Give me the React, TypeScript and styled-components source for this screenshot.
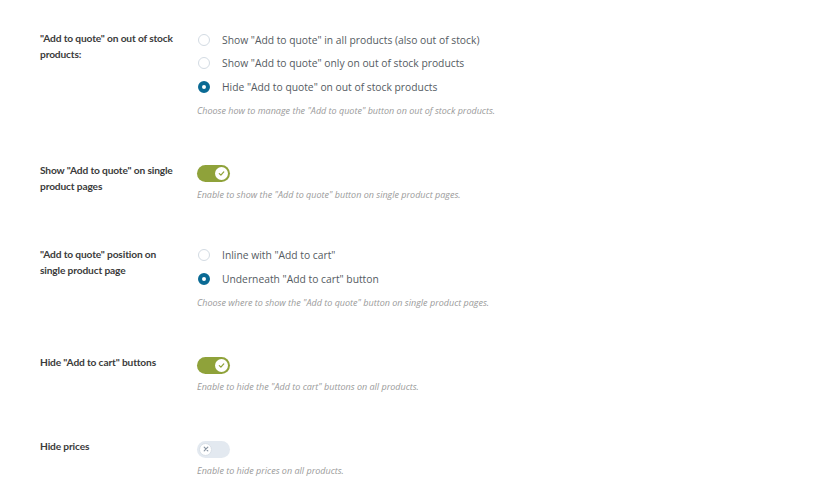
import React, { useState } from "react";
import styled, { createGlobalStyle } from "styled-components";

const GlobalStyle = createGlobalStyle`
  html, body {
    margin: 0;
    padding: 0;
    background: #ffffff;
  }
  body {
    font-family: "Open Sans", "Noto Sans", sans-serif;
    -webkit-font-smoothing: antialiased;
  }
`;

const Page = styled.div`
  width: 820px;
  height: 484px;
  padding: 30px 0 0 40px;
  box-sizing: border-box;
  display: flex;
  flex-direction: column;
  gap: 46px;
  overflow: hidden;
`;

const Row = styled.div`
  display: grid;
  grid-template-columns: 157px 1fr;
  align-items: start;
`;

const Label = styled.div`
  font-family: Lato, "Open Sans", sans-serif;
  font-size: 10.2px;
  line-height: 16px;
  font-weight: 700;
  letter-spacing: -0.15px;
  color: #3b3b3b;
  width: 138px;
`;

const Field = styled.div`
  display: flex;
  flex-direction: column;
  align-items: flex-start;
`;

const OptionList = styled.div`
  display: flex;
  flex-direction: column;
  margin-top: -2px;
`;

const Option = styled.label`
  display: flex;
  align-items: center;
  gap: 12px;
  height: 23.5px;
  padding-left: 1px;
  font-size: 10.3px;
  color: #555b62;
  cursor: pointer;
`;

const Radio = styled.span<{ $checked: boolean }>`
  width: 12px;
  height: 12px;
  box-sizing: border-box;
  border-radius: 50%;
  background: #fff;
  border: ${(p) => (p.$checked ? "4px solid #0a6a94" : "1px solid #d3dbe3")};
  flex-shrink: 0;
`;

const Description = styled.div<{ $gap: number }>`
  margin-top: ${(p) => p.$gap}px;
  font-size: 9px;
  line-height: 11px;
  font-style: italic;
  color: #9a9a9a;
`;

const Track = styled.button<{ $on: boolean }>`
  position: relative;
  width: 33px;
  height: 17px;
  margin-top: 3px;
  padding: 0;
  border: none;
  border-radius: 9px;
  background: ${(p) => (p.$on ? "#8fa23a" : "#e3e9f0")};
  cursor: pointer;
`;

const Knob = styled.span<{ $on: boolean }>`
  position: absolute;
  top: 2px;
  left: ${(p) => (p.$on ? "18px" : "2px")};
  width: 13px;
  height: 13px;
  border-radius: 50%;
  background: #fff;
  box-sizing: border-box;
  border: ${(p) => (p.$on ? "none" : "1px solid #d9e0e7")};
  display: flex;
  align-items: center;
  justify-content: center;
`;

type RadioSettingProps = {
  label: React.ReactNode;
  options: string[];
  initial: number;
  description: string;
};

const RadioSetting: React.FC<RadioSettingProps> = ({
  label,
  options,
  initial,
  description,
}) => {
  const [value, setValue] = useState(initial);
  return (
    <Row>
      <Label>{label}</Label>
      <Field>
        <OptionList>
          {options.map((opt, i) => (
            <Option key={opt} onClick={() => setValue(i)}>
              <Radio $checked={value === i} />
              {opt}
            </Option>
          ))}
        </OptionList>
        <Description $gap={6}>{description}</Description>
      </Field>
    </Row>
  );
};

type ToggleSettingProps = {
  label: React.ReactNode;
  initial: boolean;
  description: string;
};

const ToggleSetting: React.FC<ToggleSettingProps> = ({
  label,
  initial,
  description,
}) => {
  const [on, setOn] = useState(initial);
  return (
    <Row>
      <Label>{label}</Label>
      <Field>
        <Track $on={on} onClick={() => setOn(!on)}>
          <Knob $on={on}>
            {on ? (
              <svg width="7" height="7" viewBox="0 0 8 8">
                <path
                  d="M1.5 4.2 L3.3 5.9 L6.6 2.2"
                  fill="none"
                  stroke="#8fa23a"
                  strokeWidth="1.4"
                  strokeLinecap="round"
                  strokeLinejoin="round"
                />
              </svg>
            ) : (
              <svg width="6" height="6" viewBox="0 0 6 6">
                <path
                  d="M1.2 1.2 L4.8 4.8 M4.8 1.2 L1.2 4.8"
                  fill="none"
                  stroke="#8a96a3"
                  strokeWidth="1.2"
                  strokeLinecap="round"
                />
              </svg>
            )}
          </Knob>
        </Track>
        <Description $gap={7}>{description}</Description>
      </Field>
    </Row>
  );
};

export default function App() {
  return (
    <>
      <GlobalStyle />
      <Page>
        <RadioSetting
          label={<>{'"Add to quote" on out of stock'}<br />products:</>}
          options={[
            'Show "Add to quote" in all products (also out of stock)',
            'Show "Add to quote" only on out of stock products',
            'Hide "Add to quote" on out of stock products',
          ]}
          initial={2}
          description={'Choose how to manage the "Add to quote" button on out of stock products.'}
        />
        <ToggleSetting
          label={<>{'Show "Add to quote" on single'}<br />product pages</>}
          initial={true}
          description={'Enable to show the "Add to quote" button on single product pages.'}
        />
        <RadioSetting
          label={<>{'"Add to quote" position on'}<br />single product page</>}
          options={['Inline with "Add to cart"', 'Underneath "Add to cart" button']}
          initial={1}
          description={'Choose where to show the "Add to quote" button on single product pages.'}
        />
        <ToggleSetting
          label={'Hide "Add to cart" buttons'}
          initial={true}
          description={'Enable to hide the "Add to cart" buttons on all products.'}
        />
        <ToggleSetting
          label="Hide prices"
          initial={false}
          description="Enable to hide prices on all products."
        />
      </Page>
    </>
  );
}
